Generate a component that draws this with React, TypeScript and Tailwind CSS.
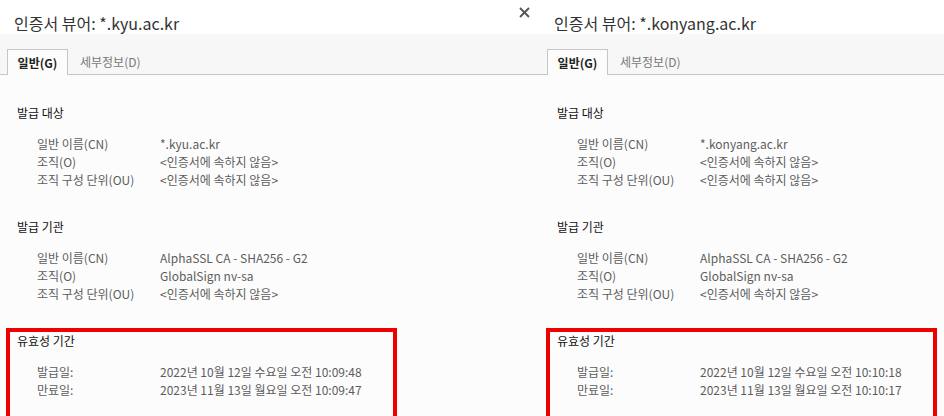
import React from "react";

interface Row {
  label: string;
  value: string;
}

interface CertData {
  host: string;
  subject: Row[];
  issuer: Row[];
  validity: Row[];
}

const certs: CertData[] = [
  {
    host: "*.kyu.ac.kr",
    subject: [
      { label: "일반 이름(CN)", value: "*.kyu.ac.kr" },
      { label: "조직(O)", value: "<인증서에 속하지 않음>" },
      { label: "조직 구성 단위(OU)", value: "<인증서에 속하지 않음>" },
    ],
    issuer: [
      { label: "일반 이름(CN)", value: "AlphaSSL CA - SHA256 - G2" },
      { label: "조직(O)", value: "GlobalSign nv-sa" },
      { label: "조직 구성 단위(OU)", value: "<인증서에 속하지 않음>" },
    ],
    validity: [
      { label: "발급일:", value: "2022년 10월 12일 수요일 오전 10:09:48" },
      { label: "만료일:", value: "2023년 11월 13일 월요일 오전 10:09:47" },
    ],
  },
  {
    host: "*.konyang.ac.kr",
    subject: [
      { label: "일반 이름(CN)", value: "*.konyang.ac.kr" },
      { label: "조직(O)", value: "<인증서에 속하지 않음>" },
      { label: "조직 구성 단위(OU)", value: "<인증서에 속하지 않음>" },
    ],
    issuer: [
      { label: "일반 이름(CN)", value: "AlphaSSL CA - SHA256 - G2" },
      { label: "조직(O)", value: "GlobalSign nv-sa" },
      { label: "조직 구성 단위(OU)", value: "<인증서에 속하지 않음>" },
    ],
    validity: [
      { label: "발급일:", value: "2022년 10월 12일 수요일 오전 10:10:18" },
      { label: "만료일:", value: "2023년 11월 13일 월요일 오전 10:10:17" },
    ],
  },
];

const Rows: React.FC<{ rows: Row[] }> = ({ rows }) => (
  <div className="mt-[13px] pl-[20px]">
    {rows.map((r, i) => (
      <div key={i} className="flex h-[18px] items-center text-[#5c5c5c]">
        <span className="w-[123px] shrink-0">{r.label}</span>
        <span className="whitespace-nowrap">{r.value}</span>
      </div>
    ))}
  </div>
);

const CertPanel: React.FC<{ cert: CertData; close?: boolean }> = ({ cert, close }) => (
  <div className="flex flex-col h-full">
    {/* Title */}
    <div className="relative shrink-0 h-[34px] bg-white pl-[14px] pt-[12px] text-[16px] leading-[22px] text-[#333] whitespace-nowrap">
      인증서 뷰어: {cert.host}
      {close && (
        <svg className="absolute right-[10px] top-[7px]" width="11" height="11" viewBox="0 0 11 11">
          <path d="M1 1L10 10M10 1L1 10" stroke="#555" strokeWidth="1.8" />
        </svg>
      )}
    </div>

    {/* Tabs */}
    <div className="shrink-0 flex items-end h-[41px] bg-[#f7f7f7] border-b border-[#c6c6c6] pl-[7px]">
      <div className="-mb-px h-[26px] w-[61px] flex items-center justify-center border border-b-0 border-[#c6c6c6] bg-[#fcfcfc] font-bold text-[#222]">
        일반(G)
      </div>
      <div className="h-[25px] px-[12px] flex items-center text-[#777]">세부정보(D)</div>
    </div>

    {/* Content */}
    <div className="flex-1 min-h-0 bg-[#fcfcfc] pt-[29px]">
      <div className="pl-[17px]">
        <div className="h-[18px] flex items-center text-[#111]">발급 대상</div>
        <Rows rows={cert.subject} />
      </div>
      <div className="pl-[17px] mt-[29px]">
        <div className="h-[18px] flex items-center text-[#111]">발급 기관</div>
        <Rows rows={cert.issuer} />
      </div>
      <div className="ml-[6px] mt-[25px] w-[391px] h-[100px] border-4 border-[#ee0000] pl-[7px]">
        <div className="h-[18px] flex items-center text-[#111]">유효성 기간</div>
        <Rows rows={cert.validity} />
      </div>
    </div>
  </div>
);

export default function App() {
  return (
    <div
      className="flex w-[944px] h-[416px] overflow-hidden bg-white text-[12px]"
      style={{ fontFamily: '"Noto Sans CJK KR", "Noto Sans", sans-serif' }}
    >
      <div className="w-[540px] shrink-0 h-full">
        <CertPanel cert={certs[0]} close />
      </div>
      <div className="flex-1 min-w-0 h-full overflow-hidden">
        <CertPanel cert={certs[1]} />
      </div>
    </div>
  );
}
